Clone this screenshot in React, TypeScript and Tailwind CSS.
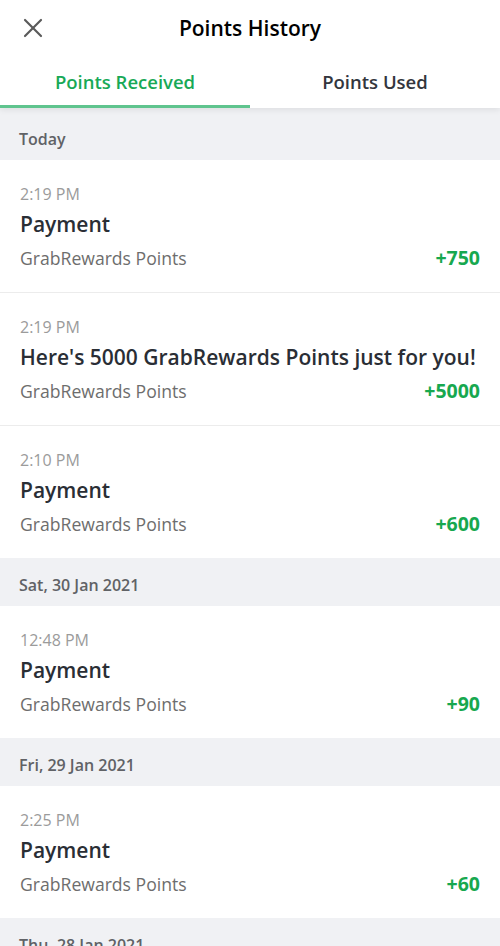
import { X } from 'lucide-react';

type Item = { time: string; title: string; amount: string };
type Section = { label: string; items: Item[] };

const sections: Section[] = [
  {
    label: 'Today',
    items: [
      { time: '2:19 PM', title: 'Payment', amount: '+750' },
      { time: '2:19 PM', title: "Here's 5000 GrabRewards Points just for you!", amount: '+5000' },
      { time: '2:10 PM', title: 'Payment', amount: '+600' },
    ],
  },
  { label: 'Sat, 30 Jan 2021', items: [{ time: '12:48 PM', title: 'Payment', amount: '+90' }] },
  { label: 'Fri, 29 Jan 2021', items: [{ time: '2:25 PM', title: 'Payment', amount: '+60' }] },
  { label: 'Thu, 28 Jan 2021', items: [] },
];

function Row({ item, last }: { item: Item; last: boolean }) {
  return (
    <div className={`px-5 pt-[22px] bg-white ${last ? 'h-[132px]' : 'h-[133px] border-b border-[#ececec]'}`}>
      <div className="text-[16px] leading-[24px] text-[#9b9b9b]">{item.time}</div>
      <div className="text-[21px] leading-[30px] font-semibold text-[#2a2e35] mt-[3px] whitespace-nowrap">{item.title}</div>
      <div className="flex items-baseline justify-between mt-[6px]">
        <span className="text-[17.6px] leading-[26px] text-[#6d6d6d]">GrabRewards Points</span>
        <span className="text-[19.5px] leading-[26px] font-bold text-[#17a84f]">{item.amount}</span>
      </div>
    </div>
  );
}

export default function App() {
  return (
    <div className="w-[500px] h-[946px] overflow-hidden bg-[#f0f1f4]" style={{ fontFamily: '"Open Sans", sans-serif' }}>
      <div className="bg-white relative z-10 shadow-[0_2px_6px_rgba(0,0,0,0.08)]">
        <div className="h-[56px] flex items-center relative">
          <X className="absolute left-[17px] top-[12px] text-[#5a5a5a]" size={32} strokeWidth={1.6} />
          <div className="w-full text-center text-[21px] font-semibold text-black pt-[1px]">Points History</div>
        </div>
        <div className="flex h-[52px]">
          <div className="flex-1 flex items-center justify-center text-[18.5px] font-semibold text-[#18a957] border-b-[3px] border-[#5fc48e] pt-[3px]">
            Points Received
          </div>
          <div className="flex-1 flex items-center justify-center text-[18.5px] font-semibold text-[#33363d]">
            Points Used
          </div>
        </div>
      </div>
      {sections.map((s) => (
        <div key={s.label}>
          <div className={`${s.label === 'Today' ? 'h-[52px] pt-[10px]' : 'h-[48px] pt-[6px]'} px-[19px] flex items-center text-[16px] font-semibold text-[#606266]`}>
            {s.label}
          </div>
          {s.items.map((it, i) => (
            <Row key={i} item={it} last={i === s.items.length - 1} />
          ))}
        </div>
      ))}
    </div>
  );
}
